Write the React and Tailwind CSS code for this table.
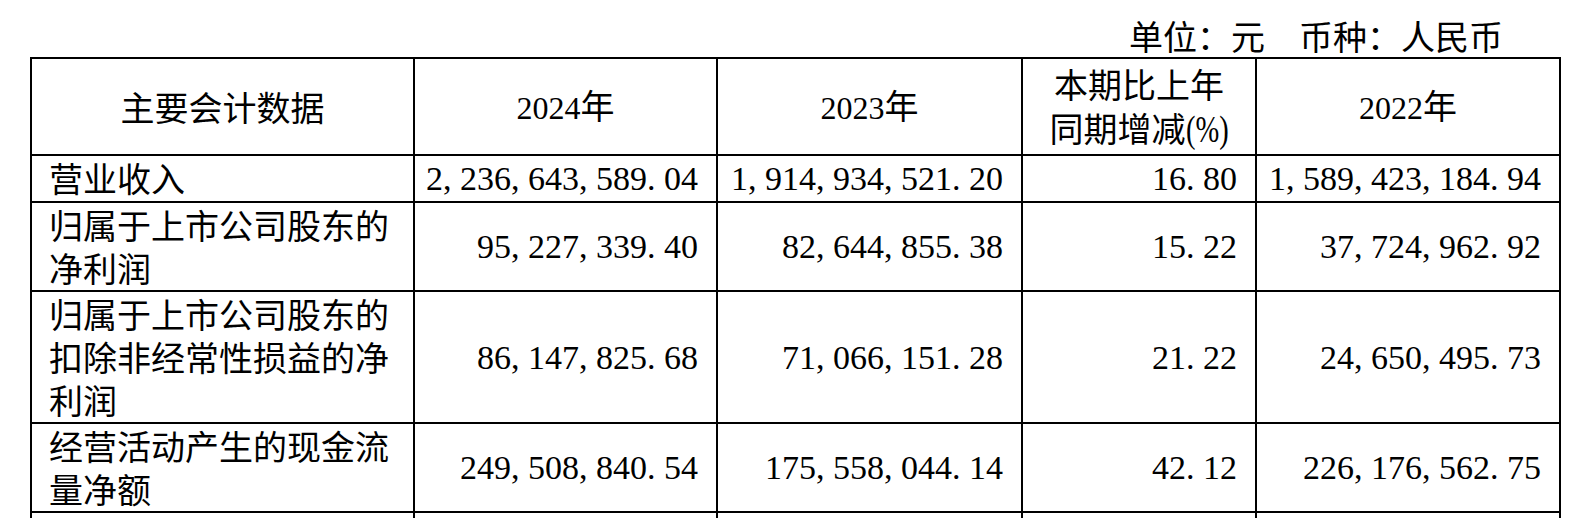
import React from "react";

const CJK = "font-['Noto_Sans_CJK_SC','Noto_Sans_CJK_JP',sans-serif]";

function Num({ v }) {
  return (
    <span className="font-['Liberation_Serif',serif] text-[34px] whitespace-nowrap">
      {v.split("").map((c, i) =>
        c === "," || c === "." ? (
          <span key={i} className="inline-block w-[17px] text-left">
            {c}
          </span>
        ) : (
          <React.Fragment key={i}>{c}</React.Fragment>
        )
      )}
    </span>
  );
}

function Year({ y, suffix = "年" }) {
  return (
    <span className="whitespace-nowrap">
      <span className="font-['Liberation_Serif',serif] text-[32px]">{y}</span>
      <span>{suffix}</span>
    </span>
  );
}

function HeadCell({ children }) {
  return (
    <div className="flex items-center justify-center bg-white text-center leading-[44px]">
      <div>{children}</div>
    </div>
  );
}

function LabelCell({ lines }) {
  return (
    <div className="flex items-center bg-white pl-[17px] pb-[2px] leading-[43px]">
      <div>
        {lines.map((l, i) => (
          <div key={i} className="whitespace-nowrap">
            {l}
          </div>
        ))}
      </div>
    </div>
  );
}

function NumCell({ v }) {
  return (
    <div className="flex items-center justify-end bg-white pr-[18px] leading-[43px]">
      <Num v={v} />
    </div>
  );
}

const rows = [
  { label: ["营业收入"], vals: ["2,236,643,589.04", "1,914,934,521.20", "16.80", "1,589,423,184.94"] },
  { label: ["归属于上市公司股东的", "净利润"], vals: ["95,227,339.40", "82,644,855.38", "15.22", "37,724,962.92"] },
  {
    label: ["归属于上市公司股东的", "扣除非经常性损益的净", "利润"],
    vals: ["86,147,825.68", "71,066,151.28", "21.22", "24,650,495.73"],
  },
  { label: ["经营活动产生的现金流", "量净额"], vals: ["249,508,840.54", "175,558,044.14", "42.12", "226,176,562.75"] },
];

export default function App() {
  return (
    <div className={`h-[518px] w-[1586px] overflow-hidden bg-white text-black text-[34px] ${CJK}`}>
      <div className="flex h-[57px] justify-end pr-[83px] pt-[19px] leading-[34px]">
        <span className="whitespace-nowrap">单位：元　币种：人民币</span>
      </div>
      <div className="ml-[30px] grid w-[1531px] grid-cols-[381px_301px_303px_232px_302px] grid-rows-[95px_45px_87px_130px_87px_95px] gap-[2px] bg-black p-[2px]">
        <HeadCell>主要会计数据</HeadCell>
        <HeadCell>
          <Year y="2024" />
        </HeadCell>
        <HeadCell>
          <Year y="2023" />
        </HeadCell>
        <HeadCell>
          <div className="whitespace-nowrap">本期比上年</div>
          <div className="whitespace-nowrap">
            同期增减
            <span className="inline-block w-[43px] text-left">
              <span className="inline-block origin-left scale-x-[0.75] font-['Liberation_Serif',serif] text-[38px]">
                (%)
              </span>
            </span>
          </div>
        </HeadCell>
        <HeadCell>
          <Year y="2022" />
        </HeadCell>

        {rows.map((r, i) => (
          <React.Fragment key={i}>
            <LabelCell lines={r.label} />
            {r.vals.map((v, j) => (
              <NumCell key={j} v={v} />
            ))}
          </React.Fragment>
        ))}

        <div className="bg-white" />
        <div className="bg-white" />
        <div className="bg-white" />
        <div className="bg-white" />
        <div className="bg-white" />
      </div>
    </div>
  );
}
